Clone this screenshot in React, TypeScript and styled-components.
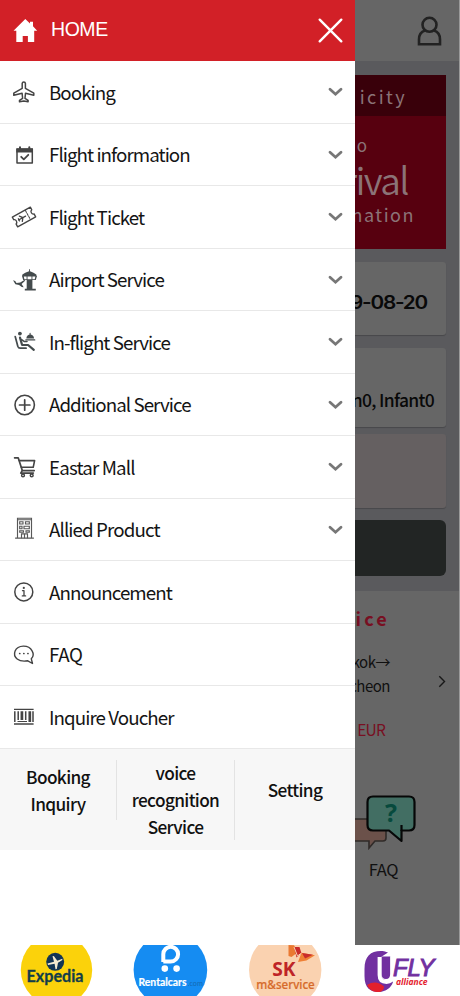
import React from "react";
import styled, { createGlobalStyle } from "styled-components";

const sans = `"Noto Sans CJK KR", "Noto Sans", sans-serif`;

const GlobalStyle = createGlobalStyle`
  * { box-sizing: border-box; }
  html, body { margin: 0; padding: 0; background: #fff; }
  body { font-family: ${sans}; color: #151515; overflow: hidden; }
  svg { display: block; flex: none; }
`;

const Screen = styled.div`
  position: relative;
  width: 460px;
  height: 996px;
  overflow: hidden;
  background: #fff;
  display: flex;
  flex-direction: column;
`;

/* ---------- dimmed home page ---------- */

const HomePage = styled.main`
  height: 945px;
  flex: none;
  background: #666;
  border-right: 1px solid #9a9a9a;
  display: flex;
  flex-direction: column;
`;

const TopBar = styled.div`
  height: 61px;
  flex: none;
  background: #666;
  display: flex;
  align-items: center;
  justify-content: flex-end;
  padding: 2px 16px 0 0;
`;

const SearchArea = styled.section`
  height: 530px;
  flex: none;
  background: #5a5a5d;
  padding: 14px 13px 0 14px;
  display: flex;
  flex-direction: column;
`;

const Promo = styled.div`
  height: 174px;
  flex: none;
  background: #57000f;
  text-align: right;
  white-space: nowrap;
`;

const PromoTitle = styled.div`
  height: 41px;
  background: #39000a;
  color: #8b7377;
  font-size: 18px;
  line-height: 43px;
  letter-spacing: 2.4px;
  padding-right: 39px;
`;

const PromoLine = styled.div<{ $size: number; $height: number; $gap: number; $right: number; $weight?: number }>`
  color: #8b7377;
  font-size: ${(p) => p.$size}px;
  height: ${(p) => p.$height}px;
  line-height: ${(p) => p.$height}px;
  letter-spacing: ${(p) => p.$gap}px;
  padding-right: ${(p) => p.$right}px;
  font-weight: ${(p) => p.$weight ?? 400};
`;

const Field = styled.div<{ $height: number; $top: number; $tint?: string }>`
  height: ${(p) => p.$height}px;
  margin-top: ${(p) => p.$top}px;
  flex: none;
  background: ${(p) => p.$tint ?? "#666"};
  border-radius: 3px;
  box-shadow: 0 1px 1px rgba(0, 0, 0, 0.2);
  display: flex;
  justify-content: flex-end;
  align-items: flex-end;
  white-space: nowrap;
`;

const DateText = styled.span`
  font: 600 18.5px/24px Inter, sans-serif;
  letter-spacing: -1.1px;
  color: #090909;
  margin: 0 19px 21px 0;
  transform: scaleX(1.12);
  transform-origin: right;
`;

const Passengers = styled.span`
  font-size: 17.5px;
  line-height: 26px;
  font-weight: 500;
  letter-spacing: -0.7px;
  color: #090909;
  margin: 0 12px 14px 0;
`;

const SearchButton = styled.div`
  height: 56px;
  margin-top: 12px;
  flex: none;
  border-radius: 6px;
  background: #222524;
`;

const FareSection = styled.section`
  width: 459px;
  display: flex;
  flex-direction: column;
  align-items: flex-end;
  white-space: nowrap;
`;

const FareTitle = styled.div`
  margin: 14px 69px 0 0;
  font-size: 18px;
  line-height: 26px;
  font-weight: 700;
  letter-spacing: 3.2px;
  color: #780f22;
`;

const FareRow = styled.div`
  height: 48px;
  margin-top: 19px;
  display: flex;
  align-items: flex-end;
  padding-right: 13px;
  gap: 48px;
`;

const Route = styled.div`
  font-size: 15px;
  line-height: 24px;
  letter-spacing: -0.5px;
  text-align: right;
  color: #101010;
`;

const Fare = styled.div`
  margin: 19px 74px 0 0;
  font-size: 15.5px;
  line-height: 24px;
  letter-spacing: -0.8px;
  color: #780f22;
`;

const HelpTile = styled.div`
  width: 100px;
  margin: 54px 25px 0 0;
  display: flex;
  flex-direction: column;
  align-items: center;
`;

const HelpLabel = styled.div`
  font-size: 16.5px;
  line-height: 24px;
  letter-spacing: -0.4px;
  color: #101010;
  margin: 6px 0 0 -1px;
`;

/* ---------- navigation drawer ---------- */

const Drawer = styled.nav`
  position: absolute;
  left: 0;
  top: 0;
  width: 355px;
  height: 945px;
  background: #fff;
`;

const DrawerHeader = styled.header`
  height: 61px;
  background: #d22027;
  color: #fff;
  display: flex;
  align-items: center;
  padding: 0 12px 0 13px;
`;

const HomeLabel = styled.span`
  flex: 1;
  margin: -3px 0 0 13px;
  font: 400 19.5px/28px "Liberation Sans", Arial, sans-serif;
  letter-spacing: -0.45px;
`;

const MenuRow = styled.div`
  height: 62.5px;
  border-bottom: 1px solid #e8e8e8;
  display: flex;
  align-items: center;
  padding: 1px 12px 0 11px;
`;

const MenuLabel = styled.span<{ $gap: number }>`
  flex: 1;
  margin-left: 12px;
  padding-bottom: 0.6px;
  font-size: 18.75px;
  line-height: 28px;
  letter-spacing: ${(p) => p.$gap}px;
  white-space: nowrap;
`;

const QuickBar = styled.div`
  height: 101px;
  background: #f7f7f7;
  display: grid;
  grid-template-columns: 117px 118px 120px;
  align-items: start;
  padding-top: 11px;
`;

const QuickLink = styled.div<{ $height: number; $last?: boolean }>`
  height: ${(p) => p.$height}px;
  display: flex;
  align-items: center;
  justify-content: center;
  text-align: center;
  border-right: ${(p) => (p.$last ? "none" : "1px solid #e3e3e3")};
  font-size: 17.25px;
  line-height: 27px;
  font-weight: 500;
  letter-spacing: -0.65px;
  color: #111;
  white-space: pre-line;
`;

/* ---------- partner strip ---------- */

const Partners = styled.footer`
  height: 51px;
  flex: none;
  background: #fff;
  position: relative;
  display: grid;
  grid-template-columns: 113px 115px 115px 117px;
`;

/* ---------- icons ---------- */

const Glyph = ({ children }: { children: React.ReactNode }) => (
  <svg width="26" height="26" viewBox="0 0 26 26" fill="none" stroke="#444" strokeWidth="1.5" strokeLinecap="round" strokeLinejoin="round">
    {children}
  </svg>
);

const icons: Record<string, React.ReactNode> = {
  plane: (
    <Glyph>
      <path d="M11.2 4.3C11.4 2.5 14.2 2.5 14.4 4.3V9.3L22.8 14.2V16.2L14.5 14.2L14 19.3L17.1 21.3V22.8L12.8 22L8.5 22.8V21.3L11.6 19.3L11.1 14.2L2.8 16.2V14.2L11.2 9.3Z" />
    </Glyph>
  ),
  calendar: (
    <Glyph>
      <path d="M6 7.1H21.3V21H6Z" />
      <path d="M5.3 6.5H22V10.5H5.3Z" fill="#444" stroke="none" />
      <path d="M9 5.3V8M18.3 5.3V8" strokeWidth="2" />
      <path d="M10.2 14.8L12.8 17.3L17.3 12.8" strokeWidth="1.8" />
    </Glyph>
  ),
  ticket: (
    <Glyph>
      <g transform="rotate(-29 13 13)" strokeWidth="1.35">
        <path d="M2.7 7.5H23.3V10.4C20.9 10.8 20.9 14.8 23.3 15.2V18.5H2.7V15.2C5 14.8 5 10.8 2.7 10.4Z" />
        <path d="M17.4 8V18" strokeDasharray="2.2 1.2" strokeWidth="1" />
        <path d="M6.8 13H14.8M11.8 13L9.4 10M11.8 13L9.4 16M7.2 11.8V14.2" strokeWidth="1.3" />
      </g>
    </Glyph>
  ),
  tower: (
    <Glyph>
      <g fill="#444b4d" stroke="none">
        <path d="M18.1 2.2H19V4.2C21.5 5 23.8 6.5 25.5 7.8V9H11.2V7.8C13 6.4 15.3 5 18.1 4.2Z" />
        <path d="M11 9H26L24.8 13H12.2ZM12.8 9.6L13.4 12.2H15.6V9.6ZM16.5 9.6V12.2H20.5V9.6ZM21.4 9.6V12.2H23.7L24.4 9.6Z" fillRule="evenodd" />
        <path d="M15.7 13H21.4V21.8H24.8V23.5H13.8V21.8H15.7Z" />
        <path d="M2 13.3L4.2 14L5.5 16L9.2 15.6L13.3 12.9L14.4 13.5L10.6 17.1L12.7 20.3L10.8 20L8 17.9L4.4 17.3Z" />
      </g>
    </Glyph>
  ),
  seat: (
    <Glyph>
      <g stroke="#444b4d">
        <path d="M4.2 7.5L6.8 17.3C7.2 18.6 7.9 19.2 9.2 19.2H15.1" strokeWidth="1.7" />
        <circle cx="8.9" cy="4.6" r="1.9" fill="#444b4d" stroke="none" />
        <path d="M9 8.6L11.1 16H17.1L22.8 20.8" strokeWidth="2.2" />
        <path d="M10.6 10.6L13.1 12.4H16" strokeWidth="1.5" />
        <path d="M14.8 10.9H23.8M19.1 4.2V5.6" strokeWidth="1.1" />
        <path d="M15.3 9.6C15.6 4 22.7 4 23.1 9.6Z" fill="#444b4d" stroke="none" />
      </g>
    </Glyph>
  ),
  plus: (
    <Glyph>
      <circle cx="13.7" cy="13" r="9.7" strokeWidth="1.6" />
      <path d="M8.5 13H18.9M13.7 7.8V18.2" strokeWidth="1.7" />
    </Glyph>
  ),
  cart: (
    <Glyph>
      <path d="M3.6 3.8H7.2L11.3 16.6H23.2" strokeWidth="1.7" />
      <path d="M8.2 6.6H23.6L22.2 13.3H10.3M11.2 16.6L9.7 19.1H22.4" strokeWidth="1.6" />
      <circle cx="12" cy="21.4" r="1.4" />
      <circle cx="20.7" cy="21.4" r="1.4" />
    </Glyph>
  ),
  building: (
    <Glyph>
      <g strokeWidth="1.15" stroke="#585858" strokeLinejoin="miter" transform="translate(0 -1.3)">
        <path d="M6.5 22V2.5H20.5V22M4.5 22.4H22.5M6.5 4H20.5" />
        <path d="M8.7 6H12V8.3H8.7ZM14.5 6H18.3V8.3H14.5ZM8.7 10.5H11V13H8.7ZM13 10.5H18.3V13H13ZM8.7 15H12.5V16.5H8.7ZM15 15H18.3V16.5H15ZM10.5 22V18.2H16.5V22M13.5 18.2V22" />
      </g>
    </Glyph>
  ),
  info: (
    <Glyph>
      <circle cx="12.8" cy="12.9" r="9" strokeWidth="1.5" />
      <circle cx="12.8" cy="8.9" r="1.1" fill="#444" stroke="none" />
      <path d="M11.5 11.7H13V16.7M11.3 16.9H14.6" strokeWidth="1.3" />
    </Glyph>
  ),
  chat: (
    <Glyph>
      <path d="M20.3 16.8C22.5 14.6 22.6 11.5 21.1 8.9C17.6 2.4 6.8 2.7 4.1 9.1C1.6 15.5 7.8 20.5 16.8 18.8L21.5 21.5L20.3 16.8Z" strokeWidth="1.4" />
      <path d="M8.7 11.5H8.8M12.8 11.5H12.9M16.9 11.5H17" strokeWidth="1.7" />
    </Glyph>
  ),
  barcode: (
    <Glyph>
      <g stroke="#444" strokeLinecap="butt">
        <path d="M3 5.4H22.6M3 20H22.6" strokeWidth="1.4" />
        <path d="M3.8 7.2V18M7.2 7.2V16M14.7 7.2V16M22 7.2V18" strokeWidth="1.5" />
        <path d="M10.9 7.2V16M18.8 7.2V18" strokeWidth="2.7" />
        <path d="M6.5 17.5H16" strokeWidth="1" />
      </g>
    </Glyph>
  ),
};

const Chevron = () => (
  <svg width="15" height="12" viewBox="0 0 15 12" fill="none" stroke="#777" strokeWidth="2.8">
    <path d="M2 3.2L7.5 8.2L13 3.2" strokeLinecap="round" />
  </svg>
);

const HomeIcon = () => (
  <svg width="25" height="26" viewBox="0 0 25 26" fill="#fff">
    <path d="M12.3 1L17 5.4V3.8H20V8.3L24.2 12.8H21.2V24H14.9V18H9.7V24H3.3V12.8H.5Z" />
  </svg>
);

const CloseIcon = () => (
  <svg width="25" height="25" viewBox="0 0 25 25" stroke="#fff" strokeWidth="2.4" strokeLinecap="round">
    <path d="M1.7 1.7L23.3 23.3M23.3 1.7L1.7 23.3" />
  </svg>
);

const UserIcon = () => (
  <svg width="27" height="31" viewBox="0 0 27 31" fill="none" stroke="#222" strokeWidth="2.6">
    <circle cx="13.5" cy="8.8" r="7" />
    <path d="M9 14.6C4.7 16 3 19.5 3 23.5V28.3H24V23.5C24 19.5 22.3 16 18 14.6" />
  </svg>
);

const NextSvg = styled.svg`
  margin-bottom: 10px;
`;

const NextIcon = () => (
  <NextSvg width="8" height="13" viewBox="0 0 8 13" fill="none" stroke="#181818" strokeWidth="1.4">
    <path d="M1.3 1.2L6.5 6.5L1.3 11.8" />
  </NextSvg>
);

const FaqIcon = () => (
  <svg width="84" height="56" viewBox="5 0 84 56">
    <path d="M10 24H46Q49 24 49 27V43Q49 46 46 46H38L32 53V46H10Z" fill="#6b514a" stroke="#302b29" strokeWidth="1.6" />
    <path d="M36 0.5H72Q77.5 .5 77.5 6V29Q77.5 34.5 72 34.5H64.5V45L52 34.5H36Q30.5 34.5 30.5 29V6Q30.5 .5 36 .5Z" transform="translate(0 1)" fill="#426e63" stroke="#060707" strokeWidth="2.2" strokeLinejoin="round" />
    <path d="M64.5 30V36" stroke="#060707" strokeWidth="2.2" />
    <text x="54" y="27" textAnchor="middle" fontFamily="Noto Sans" fontWeight="700" fontSize="25" fill="#074a3d">?</text>
  </svg>
);

/* ---------- partner logos ---------- */

const Expedia = () => (
  <svg width="113" height="51" viewBox="0 0 113 51">
    <ellipse cx="56.5" cy="25" rx="35.7" ry="36" fill="#fbd20b" />
    <circle cx="55.2" cy="16.8" r="9" fill="#123455" />
    <path d="M47.5 18.6L54 16.8L52.5 11.2L53.8 11L57.3 15.8L62.3 13.8L62.4 15L58 17.7L56.8 24L55.5 24.3L54.6 18.8L48 19.9Z" fill="#f5ead0" />
    <text x="26.5" y="37.3" textLength="57" lengthAdjust="spacingAndGlyphs" fontFamily="Lato" fontWeight="700" fontSize="17.5" fill="#123d4a" stroke="#123d4a" strokeWidth=".3">Expedia</text>
  </svg>
);

const Rentalcars = () => (
  <svg width="115" height="51" viewBox="0 0 115 51">
    <ellipse cx="57.4" cy="25" rx="36.8" ry="37" fill="#158cf2" />
    <path d="M50.3 17V9.2A7.4 7.4 0 1 1 57.7 16.6H50.3" fill="none" stroke="#fff" strokeWidth="4" />
    <circle cx="51.8" cy="23.6" r="3.3" fill="#fff" />
    <circle cx="63.6" cy="23.6" r="3.3" fill="#fff" />
    <text x="25.5" y="41" textLength="48" lengthAdjust="spacingAndGlyphs" fontFamily="Lato" fontWeight="700" fontSize="10.5" fill="#fff" stroke="#fff" strokeWidth=".2">Rentalcars</text>
    <text x="74.8" y="41" textLength="15" lengthAdjust="spacingAndGlyphs" fontFamily="Lato" fontSize="7.5" fill="#1468b1">.com</text>
  </svg>
);

const SkService = () => (
  <svg width="115" height="51" viewBox="0 0 115 51">
    <ellipse cx="57.2" cy="25" rx="36.2" ry="37" fill="#fad2b0" />
    <path d="M60.5 0L66 .3L70 7L63.5 12L60.5 11Z" fill="#ea7932" />
    <path d="M66 2H71.5L73.5 8.2L68.5 12.5Z" fill="#c92b2b" />
    <path d="M70 17L73.5 7.8L87 10.2L78.5 15.5Z" fill="#ef8035" />
    <path d="M74 8L85 9.8L77 13.4Z" fill="#c92b2b" />
    <path d="M66 2L69.5 11L73.5 8" fill="none" stroke="#fad2b0" strokeWidth="1" />
    <text x="44.3" y="30.5" textLength="23.3" lengthAdjust="spacingAndGlyphs" fontFamily="Open Sans" fontWeight="700" fontSize="19.5" fill="#be2427">SK</text>
    <text x="28.3" y="44.2" textLength="58.5" lengthAdjust="spacingAndGlyphs" fontFamily="Noto Sans" fontWeight="500" fontSize="12.5" fill="#d66b2b" stroke="#d66b2b" strokeWidth=".2">m&amp;service</text>
  </svg>
);

const UFly = () => (
  <svg width="117" height="51" viewBox="0 0 117 51">
    <path d="M41 6.2C29 5 21.5 10 21.5 24V31C21.5 43 27 47 36 47C43 46.5 48 43 50 37L47.5 35H43Q38 35 38 29V12L45 7.5Z" fill="#7130a0" />
    <path d="M24 40Q33 34.5 41 41.5Q41 45.5 37 47C31 47.3 26.5 45.5 24 40Z" fill="#e4202d" />
    <path d="M38.5 11.5H47.2V29Q47.2 34 43 34Q38.5 34 38.5 29Z" fill="#7130a0" />
    <path d="M36.5 12V30Q36.5 37 43.5 37Q49.5 37 49.5 30V12" fill="none" stroke="#fff" strokeWidth="3.8" />
    <text x="50" y="31.2" textLength="41.5" lengthAdjust="spacingAndGlyphs" fontFamily="Liberation Sans" fontStyle="italic" fontSize="24.5" fill="#7130a0" stroke="#7130a0" strokeWidth="1">FLY</text>
    <text x="53" y="39.8" textLength="31.5" lengthAdjust="spacingAndGlyphs" fontFamily="Open Sans" fontStyle="italic" fontWeight="700" fontSize="8" fill="#e4202d">alliance</text>
  </svg>
);

const menu: { label: string; icon: string; expandable?: boolean; gap: number }[] = [
  { label: "Booking", icon: "plane", expandable: true, gap: -0.95 },
  { label: "Flight information", icon: "calendar", expandable: true, gap: -0.95 },
  { label: "Flight Ticket", icon: "ticket", expandable: true, gap: -0.92 },
  { label: "Airport Service", icon: "tower", expandable: true, gap: -0.95 },
  { label: "In-flight Service", icon: "seat", expandable: true, gap: -0.95 },
  { label: "Additional Service", icon: "plus", expandable: true, gap: -0.95 },
  { label: "Eastar Mall", icon: "cart", expandable: true, gap: -0.85 },
  { label: "Allied Product", icon: "building", expandable: true, gap: -0.9 },
  { label: "Announcement", icon: "info", gap: -0.95 },
  { label: "FAQ", icon: "chat", gap: -0.4 },
  { label: "Inquire Voucher", icon: "barcode", gap: -0.93 },
];

export default function App() {
  return (
    <>
      <GlobalStyle />
      <Screen>
        <HomePage>
          <TopBar><UserIcon /></TopBar>
          <SearchArea>
            <Promo>
              <PromoTitle>icity</PromoTitle>
              <PromoLine $size={17} $height={58} $gap={2} $right={77}>to</PromoLine>
              <PromoLine $size={37} $height={10} $gap={-1.6} $right={38} $weight={350}>Arrival</PromoLine>
              <PromoLine $size={18} $height={60} $gap={1.5} $right={31}>Information</PromoLine>
            </Promo>
            <Field $height={73} $top={13}><DateText>2019-08-20</DateText></Field>
            <Field $height={79} $top={13}><Passengers>Children0, Infant0</Passengers></Field>
            <Field $height={74} $top={7} $tint="#656061" />
            <SearchButton />
          </SearchArea>
          <FareSection>
            <FareTitle>Service</FareTitle>
            <FareRow>
              <Route>Bangkok→<br />Incheon</Route>
              <NextIcon />
            </FareRow>
            <Fare>EUR</Fare>
            <HelpTile><FaqIcon /><HelpLabel>FAQ</HelpLabel></HelpTile>
          </FareSection>
        </HomePage>
        <Drawer>
          <DrawerHeader>
            <HomeIcon />
            <HomeLabel>HOME</HomeLabel>
            <CloseIcon />
          </DrawerHeader>
          {menu.map((item) => (
            <MenuRow key={item.label}>
              {icons[item.icon]}
              <MenuLabel $gap={item.gap}>{item.label}</MenuLabel>
              {item.expandable && <Chevron />}
            </MenuRow>
          ))}
          <QuickBar>
            <QuickLink $height={60}>{"Booking\nInquiry"}</QuickLink>
            <QuickLink $height={80}>{"voice\nrecognition\nService"}</QuickLink>
            <QuickLink $height={60} $last>Setting</QuickLink>
          </QuickBar>
        </Drawer>
        <Partners>
          <Expedia />
          <Rentalcars />
          <SkService />
          <UFly />
        </Partners>
      </Screen>
    </>
  );
}
